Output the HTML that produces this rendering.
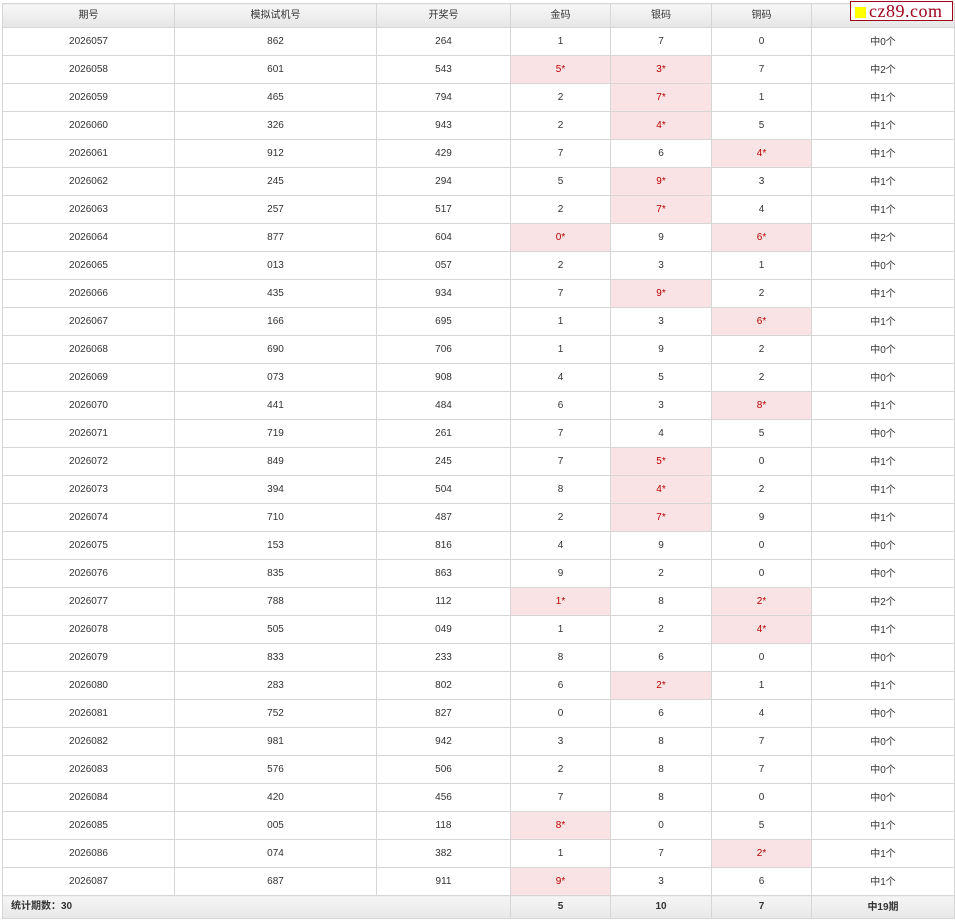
<!DOCTYPE html>
<html><head><meta charset="utf-8"><style>
body{margin:0;background:#fff;width:955px;height:920px;overflow:hidden;position:relative;font-family:"Liberation Sans","Noto Sans CJK SC",sans-serif;font-size:10px;color:#333}
table{position:absolute;left:2px;top:3px;border-collapse:collapse;table-layout:fixed;width:952px}
td,th{border:1px solid #d6d6d6;text-align:center;padding:0;overflow:hidden;line-height:12px;vertical-align:middle}
th{height:23px;font-weight:normal;background:linear-gradient(#f7f7f7,#e6e6e6);color:#333}
td{height:27px}
td.h{background:#f9e3e4;color:#b00}
td.c span{position:relative;top:1px}
tr.f td{height:22px;background:linear-gradient(#f5f5f5,#e8e8e8);font-weight:bold}
.logo{position:absolute;left:850px;top:1px;width:101px;height:18px;border:1px solid #a0001a;background:#fff;font-family:"Liberation Serif",serif;font-size:18px;color:#a0001a;line-height:18px;letter-spacing:0.5px}
.logo i{display:inline-block;width:11px;height:11px;background:#ff0;margin:0 3px 0 4px;vertical-align:-1px}
</style></head><body>
<table>
<colgroup><col style="width:172px"><col style="width:202px"><col style="width:134px"><col style="width:100px"><col style="width:101px"><col style="width:100px"><col style="width:143px"></colgroup>
<tr><th>期号</th><th>模拟试机号</th><th>开奖号</th><th>金码</th><th>银码</th><th>铜码</th><th></th></tr>
<tbody id="b"></tbody>
<tr class="f"><td colspan="3" style="text-align:left;padding-left:8px">统计期数：30</td><td>5</td><td>10</td><td>7</td><td class="c"><span>中19期</span></td></tr>
</table>
<div class="logo"><i></i>cz89.com</div>
<script>
var d=[
["2026057","862","264","1","7","0",0],
["2026058","601","543","5*","3*","7",2],
["2026059","465","794","2","7*","1",1],
["2026060","326","943","2","4*","5",1],
["2026061","912","429","7","6","4*",1],
["2026062","245","294","5","9*","3",1],
["2026063","257","517","2","7*","4",1],
["2026064","877","604","0*","9","6*",2],
["2026065","013","057","2","3","1",0],
["2026066","435","934","7","9*","2",1],
["2026067","166","695","1","3","6*",1],
["2026068","690","706","1","9","2",0],
["2026069","073","908","4","5","2",0],
["2026070","441","484","6","3","8*",1],
["2026071","719","261","7","4","5",0],
["2026072","849","245","7","5*","0",1],
["2026073","394","504","8","4*","2",1],
["2026074","710","487","2","7*","9",1],
["2026075","153","816","4","9","0",0],
["2026076","835","863","9","2","0",0],
["2026077","788","112","1*","8","2*",2],
["2026078","505","049","1","2","4*",1],
["2026079","833","233","8","6","0",0],
["2026080","283","802","6","2*","1",1],
["2026081","752","827","0","6","4",0],
["2026082","981","942","3","8","7",0],
["2026083","576","506","2","8","7",0],
["2026084","420","456","7","8","0",0],
["2026085","005","118","8*","0","5",1],
["2026086","074","382","1","7","2*",1],
["2026087","687","911","9*","3","6",1]];
var h="";d.forEach(function(r){h+="<tr>";for(var i=0;i<6;i++){h+="<td"+(r[i].indexOf("*")>0?' class="h"':"")+">"+r[i]+"</td>";}h+='<td class="c"><span>中'+r[6]+"个</span></td></tr>";});
document.getElementById("b").innerHTML=h;
</script>
</body></html>
